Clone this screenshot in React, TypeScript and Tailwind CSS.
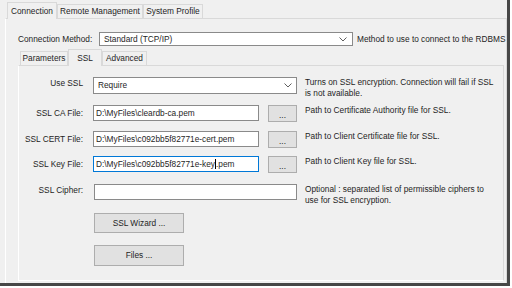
const Chevron = () => (
  <svg width="8" height="5" viewBox="0 0 8 5" className="shrink-0">
    <path d="M0.5 0.5 L4 4 L7.5 0.5" fill="none" stroke="#5f5f5f" strokeWidth="1" />
  </svg>
)

function Tab({ label, width, active }: { label: string; width: string; active?: boolean }) {
  return active ? (
    <div
      className={`${width} h-[17px] -mb-px relative bg-[#f0f0f0] border border-b-0 border-[#d9d9d9] flex items-start justify-center pt-[2px]`}
    >
      {label}
    </div>
  ) : (
    <div className={`${width} h-[14px] bg-[#f0f0f0] border border-b-0 border-[#d9d9d9] flex items-center justify-center`}>
      {label}
    </div>
  )
}

function FileRow({ label, value, desc, focused, mt }: { label: string; value: React.ReactNode; desc: string; focused?: boolean; mt: string }) {
  return (
    <div className={`flex items-start h-[17px] ${mt}`}>
      <div className="w-[64px] mr-[10px] text-right leading-[17px]">{label}</div>
      <div
        className={`w-[166px] h-[16px] bg-white border pl-[2px] flex items-center whitespace-nowrap overflow-hidden ${
          focused ? 'border-[#0078d7]' : 'border-[#8a8a8a]'
        }`}
      >
        {value}
      </div>
      <div className="w-[29px] h-[17px] ml-[9px] bg-[#e1e1e1] border border-[#adadad] flex items-end justify-center pb-[2px] leading-[8px]">
        ...
      </div>
      <div className="ml-[8px] leading-[11px] whitespace-nowrap">{desc}</div>
    </div>
  )
}

export default function App() {
  return (
    <div className="w-[512px] h-[288px] bg-white font-['Liberation_Sans',Arial,sans-serif] text-[8.3px] text-[#1e1e1e]">
      <div className="w-[510px] h-[286px] bg-[#f0f0f0] border-r-[3px] border-b-[3px] border-[#474747] pt-[2px] pl-[5px] flex flex-col">
        {/* Outer tabs */}
        <div className="flex items-end h-[16px] pl-[2px]">
          <Tab label="Connection" width="w-[50px]" active />
          <Tab label="Remote Management" width="w-[86px]" />
          <Tab label="System Profile" width="w-[60px]" />
        </div>

        <div className="w-[502px] flex-1 border-t border-r border-[#d9d9d9] border-l border-l-white flex flex-col">
          {/* Connection method */}
          <div className="flex items-center h-[14px] mt-[13px] pl-[12px]">
            <div className="w-[81px]">Connection Method:</div>
            <div className="w-[254px] h-[14px] bg-white border border-[#8a8a8a] flex items-center justify-between pl-[4px] pr-[5px]">
              <span>Standard (TCP/IP)</span>
              <Chevron />
            </div>
            <div className="ml-[4px] whitespace-nowrap">Method to use to connect to the RDBMS</div>
          </div>

          {/* Inner tabs */}
          <div className="flex items-end h-[16px] mt-[3px] ml-[12px] pl-[2px]">
            <Tab label="Parameters" width="w-[48px]" />
            <Tab label="SSL" width="w-[34px]" active />
            <Tab label="Advanced" width="w-[45px]" />
          </div>

          <div className="ml-[12px] w-[486px] flex-1 mb-[2px] border-t border-r border-[#d9d9d9] border-l border-l-white border-b border-b-white pt-[11px] flex flex-col">
            {/* Use SSL */}
            <div className="flex items-start h-[17px]">
              <div className="w-[64px] mr-[10px] text-right leading-[11px] pt-[1px]">Use SSL</div>
              <div className="w-[204px] h-[17px] bg-white border border-[#8a8a8a] flex items-center justify-between pl-[4px] pr-[4px]">
                <span>Require</span>
                <Chevron />
              </div>
              <div className="ml-[8px] leading-[11px] whitespace-nowrap">
                Turns on SSL encryption. Connection will fail if SSL
                <br />
                is not available.
              </div>
            </div>

            <FileRow mt="mt-[11px]" label="SSL CA File:" value="D:\MyFiles\cleardb-ca.pem" desc="Path to Certificate Authority file for SSL." />
            <FileRow mt="mt-[9px]" label="SSL CERT File:" value="D:\MyFiles\c092bb5f82771e-cert.pem" desc="Path to Client Certificate file for SSL." />
            <FileRow
              mt="mt-[8px]"
              focused
              label="SSL Key File:"
              value={
                <>
                  <span>D:\MyFiles\c092bb5f82771e-key</span>
                  <span className="inline-block w-px h-[10px] bg-black" />
                  <span>.pem</span>
                </>
              }
              desc="Path to Client Key file for SSL."
            />

            {/* Cipher */}
            <div className="flex items-start h-[16px] mt-[11px]">
              <div className="w-[64px] mr-[11px] text-right leading-[11px] pt-[1px]">SSL Cipher:</div>
              <div className="w-[203px] h-[16px] bg-white border border-[#8a8a8a]" />
              <div className="ml-[8px] leading-[11px] whitespace-nowrap">
                Optional : separated list of permissible ciphers to
                <br />
                use for SSL encryption.
              </div>
            </div>

            <div className="ml-[75px] mt-[13px] w-[90px] h-[20px] bg-[#e1e1e1] border border-[#adadad] flex items-center justify-center">
              SSL Wizard ...
            </div>
            <div className="ml-[75px] mt-[12px] w-[90px] h-[21px] bg-[#e1e1e1] border border-[#adadad] flex items-center justify-center">
              Files ...
            </div>
          </div>
        </div>
      </div>
    </div>
  )
}
